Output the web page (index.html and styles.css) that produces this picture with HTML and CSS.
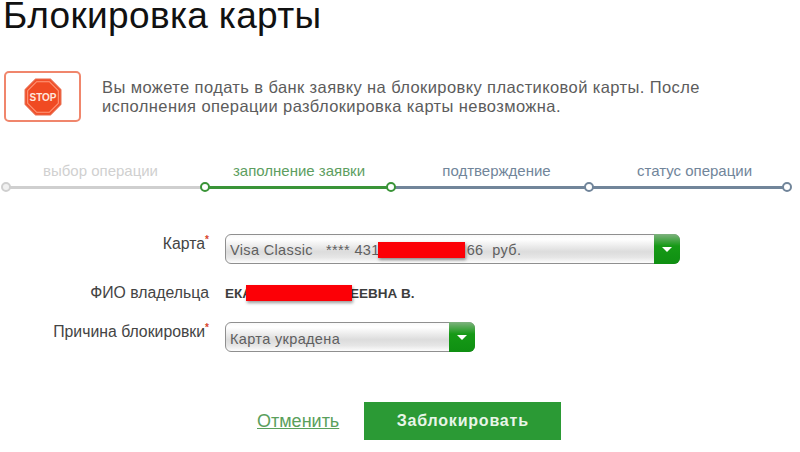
FILE: index.html
```html
<!DOCTYPE html>
<html lang="en">
<head>
    <meta charset="UTF-8">
    <title>Блокировка карты</title>
    <link rel="stylesheet" href="styles.css">
</head>
<body>
    <h1>Блокировка карты</h1>

    <div class="notice">
        <div class="notice-icon">
            <svg width="38" height="38" viewBox="0 0 36 36">
                <polygon points="11,1 25,1 35,11 35,25 25,35 11,35 1,25 1,11" fill="#f2502a" stroke="#e8694a" stroke-width="1"/>
                <polygon points="12,3.5 24,3.5 32.5,12 32.5,24 24,32.5 12,32.5 3.5,24 3.5,12" fill="#f04a22" stroke="#ff9a7c" stroke-width="1"/>
                <text x="18" y="21.5" text-anchor="middle" class="stop-text">STOP</text>
            </svg>
        </div>
        <p>Вы можете подать в банк заявку на блокировку пластиковой карты. После исполнения операции разблокировка карты невозможна.</p>
    </div>

    <div class="steps">
        <div class="step step-done">
            <span class="step-label">выбор операции</span>
            <div class="step-track"><span class="node"></span><span class="line"></span></div>
        </div>
        <div class="step step-active">
            <span class="step-label">заполнение заявки</span>
            <div class="step-track"><span class="node"></span><span class="line"></span></div>
        </div>
        <div class="step step-next">
            <span class="step-label">подтверждение</span>
            <div class="step-track"><span class="node node-green"></span><span class="line"></span></div>
        </div>
        <div class="step step-next">
            <span class="step-label">статус операции</span>
            <div class="step-track"><span class="node"></span><span class="line"></span><span class="node node-end"></span></div>
        </div>
    </div>

    <form class="form">
        <div class="row row-card">
            <label>Карта<sup>*</sup></label>
            <div class="select select-wide">
                <span class="select-value">Visa Classic &nbsp; **** 431<span class="gap-a"></span>66 &nbsp;руб.</span>
                <span class="select-arrow"></span>
                <span class="redact redact-card"></span>
            </div>
        </div>
        <div class="row row-name">
            <label>ФИО владельца</label>
            <div class="owner">
                <span>ЕКА</span><span class="gap-b"></span><span>ЕЕВНА В.</span>
                <span class="redact redact-name"></span>
            </div>
        </div>
        <div class="row row-reason">
            <label>Причина блокировки<sup>*</sup></label>
            <div class="select select-narrow">
                <span class="select-value">Карта украдена</span>
                <span class="select-arrow"></span>
            </div>
        </div>
        <div class="actions">
            <a href="#" class="cancel">Отменить</a>
            <button type="button" class="submit">Заблокировать</button>
        </div>
    </form>
</body>
</html>
```

FILE: styles.css
```css
:root {
    --green: #2b9a35;
    --slate: #71859a;
    --text-color: #555;
}

* {
    margin: 0;
    padding: 0;
    box-sizing: border-box;
}

body {
    font-family: "Liberation Sans", Arial, sans-serif;
    color: var(--text-color);
    background: #fff;
    width: 800px;
    height: 452px;
    overflow: hidden;
}

h1 {
    font-size: 37px;
    font-weight: normal;
    line-height: 32px;
    color: #111;
    padding: 0 0 0 3px;
    letter-spacing: 0.35px;
    height: 71px;
}

/* Notice */
.notice {
    display: flex;
    align-items: center;
    gap: 21px;
    padding-left: 4px;
    height: 51px;
}

.notice-icon {
    width: 77px;
    height: 51px;
    flex: none;
    border: 2px solid #f0866c;
    border-radius: 5px;
    display: flex;
    align-items: center;
    justify-content: center;
}

.stop-text {
    font-family: "Liberation Sans", Arial, sans-serif;
    font-size: 9.5px;
    font-weight: bold;
    fill: #ffe6dc;
}

.notice p {
    width: 650px;
    font-size: 16.5px;
    line-height: 19px;
    letter-spacing: 0.4px;
    color: #5c5c5c;
}

/* Steps */
.steps {
    display: flex;
    margin: 41px 0 0 1px;
}

.step {
    display: flex;
    flex-direction: column;
    align-items: center;
    width: 198px;
}

.step-done {
    width: 199px;
}

.step-active {
    width: 186px;
}

.step-label {
    font-size: 15px;
    line-height: 16px;
    height: 19px;
}

.step-track {
    display: flex;
    align-items: center;
    width: 100%;
    height: 10px;
}

.line {
    flex: 1;
    height: 3px;
    margin: 0 -1px;
}

.node {
    width: 10px;
    height: 10px;
    flex: none;
    border-radius: 50%;
    border: 2px solid;
    background: #fff;
    position: relative;
    z-index: 1;
}

.node-end {
    margin-right: -10px;
}

.step-done .step-label { color: #d0d0d0; }
.step-done .line { background: #cfcfcf; }
.step-done .node { border-color: #cfcfcf; background: #f1f1f1; }

.step-active .step-label { color: #5d9e5f; margin-left: 12px; }
.step-active .line { background: #3a9438; }
.step-active .node { border-color: #3a9438; }

.step-next .step-label { color: var(--slate); margin-left: 23px; }
.step-next .line { background: var(--slate); }
.step-next .node { border-color: var(--slate); }
.step-next .node-green { border-color: #3a9438; }

/* Form */
.form {
    display: flex;
    flex-direction: column;
    margin-top: 42px;
    font-size: 14px;
}

.row {
    display: flex;
    align-items: center;
    gap: 16px;
}

.row label {
    width: 209px;
    text-align: right;
    flex: none;
    font-size: 15.8px;
    color: #444;
}

.row sup {
    color: #d8432a;
    font-size: 10px;
    font-weight: bold;
    line-height: 0;
}

.row-card {
    height: 30px;
}

.row-card label,
.row-reason label {
    margin-top: -11px;
}

.row-name {
    height: 30px;
    margin-top: 14px;
}

.row-reason {
    height: 30px;
    margin-top: 14px;
}

.select {
    position: relative;
    height: 30px;
    display: flex;
    border: 1px solid #8f8f8f;
    border-radius: 6px;
    background: linear-gradient(#f9f9f9, #fff 15%, #dcdcdc 60%, #e6e6e6 80%, #fdfdfd);
}

.select-wide {
    width: 455px;
}

.select-narrow {
    width: 250px;
}

.select-value {
    flex: 1;
    padding: 7px 0 0 4px;
    font-size: 14.5px;
    line-height: 16px;
    letter-spacing: 0.35px;
    color: #5f5f5f;
    white-space: nowrap;
}

.select-narrow .select-value {
    padding-top: 8px;
}

.select-arrow {
    width: 26px;
    margin: -1px -1px -1px 0;
    border-radius: 0 6px 6px 0;
    background: linear-gradient(#7fb27f, #169a16 40%, #0f8f12);
    display: flex;
    align-items: center;
    justify-content: center;
}

.select-arrow::after {
    content: "";
    border-left: 5px solid transparent;
    border-right: 5px solid transparent;
    border-top: 5px solid #fff;
}

.gap-a {
    display: inline-block;
    width: 87px;
}

.gap-b {
    display: inline-block;
    width: 98px;
}

.owner {
    position: relative;
    font-size: 13.5px;
    font-weight: bold;
    color: #3d3d3d;
    white-space: nowrap;
}

.redact {
    position: absolute;
    background: #fc0006;
    box-shadow: 1px 2px 3px rgba(0, 0, 0, 0.4);
    height: 16px;
}

.redact-card {
    left: 152px;
    top: 7px;
    width: 87px;
}

.redact-name {
    left: 21px;
    top: -1px;
    width: 106px;
}

.actions {
    display: flex;
    align-items: center;
    gap: 25px;
    margin: 50px 0 0 257px;
}

.cancel {
    color: #5aa05c;
    font-size: 18px;
}

.submit {
    width: 197px;
    height: 38px;
    border: none;
    background: var(--green);
    color: #e8f5e8;
    font-family: inherit;
    font-size: 16px;
    font-weight: bold;
    letter-spacing: 0.8px;
}
```
